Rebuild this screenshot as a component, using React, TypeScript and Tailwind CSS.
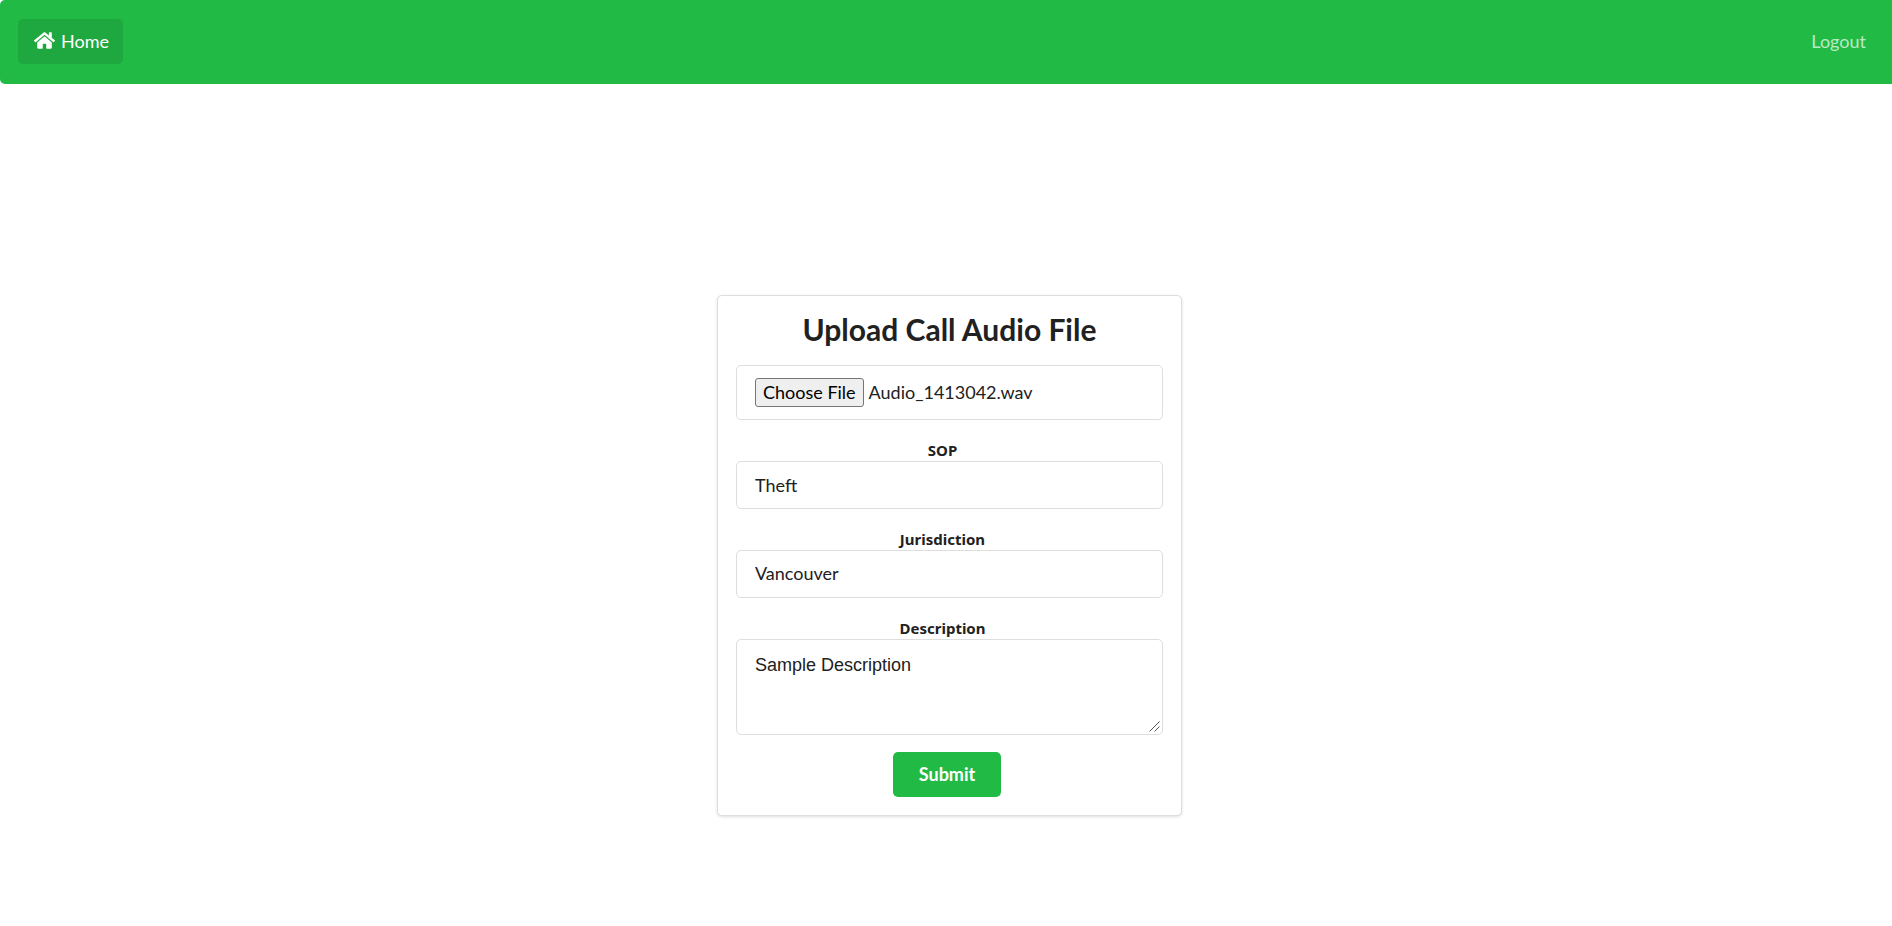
import { useRef, useState } from "react";
import type { ChangeEvent, ReactNode } from "react";

const boxClass =
  "block w-full rounded-[5px] border border-[#dededf] bg-white px-[18px] text-lg text-[#212121] outline-none focus:border-[#85b7d9]";

function HomeIcon() {
  return (
    <svg viewBox="0 0 576 512" fill="currentColor" className="h-[19px] w-[21px]" aria-hidden="true">
      <path d="M488 312.7V456c0 13.3-10.7 24-24 24H348c-6.6 0-12-5.4-12-12V356c0-6.6-5.4-12-12-12h-72c-6.6 0-12 5.4-12 12v112c0 6.6-5.4 12-12 12H112c-13.3 0-24-10.7-24-24V312.7c0-3.6 1.6-7 4.4-9.3l188-154.8c4.4-3.6 10.8-3.6 15.3 0l188 154.8c2.7 2.3 4.3 5.7 4.3 9.3zm83.6-60.9L488 182.9V44.4c0-6.6-5.4-12-12-12h-56c-6.6 0-12 5.4-12 12V117l-89.5-73.7c-17.7-14.6-43.3-14.6-61 0L4.4 251.8c-5.1 4.2-5.8 11.8-1.6 16.9l25.5 31c4.2 5.1 11.8 5.8 16.9 1.6l235.2-193.7c4.4-3.6 10.8-3.6 15.3 0l235.2 193.7c5.1 4.2 12.7 3.5 16.9-1.6l25.5-31c4.2-5.2 3.4-12.7-1.7-16.9z" />
    </svg>
  );
}

function Field({ id, label, children }: { id: string; label: string; children: ReactNode }) {
  return (
    <div className="flex flex-col pt-5">
      <label
        htmlFor={id}
        className="mr-3.5 self-center font-['Noto_Sans',sans-serif] text-[15px] leading-[21px] font-bold"
      >
        {label}
      </label>
      {children}
    </div>
  );
}

function Navbar() {
  return (
    <nav className="flex h-[84px] items-start justify-between rounded-l-[5px] bg-[#21ba45] px-[18px] pt-[19px] text-lg">
      <a
        href="#home"
        className="flex h-[45px] items-center gap-1.5 rounded-[5px] bg-[#1fa83f] pr-3.5 pb-0.5 pl-4 text-white"
      >
        <HomeIcon />
        Home
      </a>
      <a href="#logout" className="flex h-[45px] items-center px-2 pb-0.5 text-white/70">
        Logout
      </a>
    </nav>
  );
}

export default function App() {
  const fileInput = useRef<HTMLInputElement>(null);
  const [fileName, setFileName] = useState("Audio_1413042.wav");

  const handleFile = (event: ChangeEvent<HTMLInputElement>) => {
    const file = event.target.files?.[0];
    if (file) setFileName(file.name);
  };

  return (
    <div className="min-h-screen bg-white font-[Lato,sans-serif] text-[#212121]">
      <Navbar />
      <main className="flex justify-center pt-[211px] pl-[7px]">
        <form
          className="flex w-full max-w-[465px] flex-col rounded-[5px] border border-[#dededf] bg-white p-[18px] shadow-[0_1px_3px_rgba(34,36,38,0.15)]"
          onSubmit={(event) => event.preventDefault()}
        >
          <h1 className="mb-[21px] text-center text-3xl leading-[30px] font-bold">
            Upload Call Audio File
          </h1>
          <div className="flex h-[55px] items-center gap-[5px] rounded-[5px] border border-[#dededf] px-[18px] text-lg leading-6">
            <input
              ref={fileInput}
              type="file"
              accept="audio/*"
              aria-label="Call audio file"
              className="hidden"
              onChange={handleFile}
            />
            <button
              type="button"
              onClick={() => fileInput.current?.click()}
              className="h-[29px] rounded-[3px] border border-[#767676] bg-[#efefef] px-[7px] pb-0.5 text-black"
            >
              Choose File
            </button>
            <span className="pb-0.5">{fileName}</span>
          </div>
          <Field id="sop" label="SOP">
            <input id="sop" type="text" defaultValue="Theft" className={`${boxClass} h-12`} />
          </Field>
          <Field id="jurisdiction" label="Jurisdiction">
            <input
              id="jurisdiction"
              type="text"
              defaultValue="Vancouver"
              className={`${boxClass} h-12 pb-0.5`}
            />
          </Field>
          <Field id="description" label="Description">
            <div className="relative">
              <textarea
                id="description"
                defaultValue="Sample Description"
                className={`${boxClass} h-24 resize-y py-[11px] font-['Liberation_Sans',sans-serif] [&::-webkit-resizer]:bg-transparent`}
              />
              <svg
                viewBox="0 0 11 11"
                className="pointer-events-none absolute right-[3px] bottom-[3px] size-[11px]"
                fill="none"
                stroke="#555555"
                aria-hidden="true"
              >
                <path d="M0.5 10.5 10.5 0.5M5.5 10.5 10.5 5.5" />
              </svg>
            </div>
          </Field>
          <button
            type="submit"
            className="mt-[17px] mr-[5px] h-[45px] self-center rounded-[5px] bg-[#21ba45] px-[26px] pb-0.5 text-lg font-bold text-white"
          >
            Submit
          </button>
        </form>
      </main>
    </div>
  );
}
